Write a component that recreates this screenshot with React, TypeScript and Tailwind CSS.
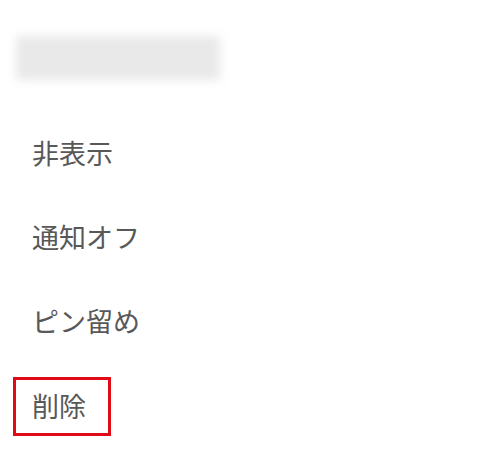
import React from 'react';

const items = ['非表示', '通知オフ', 'ピン留め'];

export default function App() {
  return (
    <div className="w-[477px] h-[455px] bg-white overflow-hidden" style={{ fontFamily: '"Noto Sans CJK JP", sans-serif' }}>
      <div className="pt-[36px] pl-[16px]">
        <div className="w-[204px] h-[44px] bg-[#e9e9e9] blur-[5px]" />
      </div>
      <div className="mt-[31px] flex flex-col">
        {items.map((label) => (
          <div key={label} className="h-[84px] flex items-center pl-[32px] text-[27px] text-[#585858]">
            {label}
          </div>
        ))}
        <div className="mt-[14px] ml-[13px] w-[98px] h-[59px] border-[3px] border-[#e10b17] flex items-center pl-[16px] text-[27px] text-[#585858]">
          削除
        </div>
      </div>
    </div>
  );
}
